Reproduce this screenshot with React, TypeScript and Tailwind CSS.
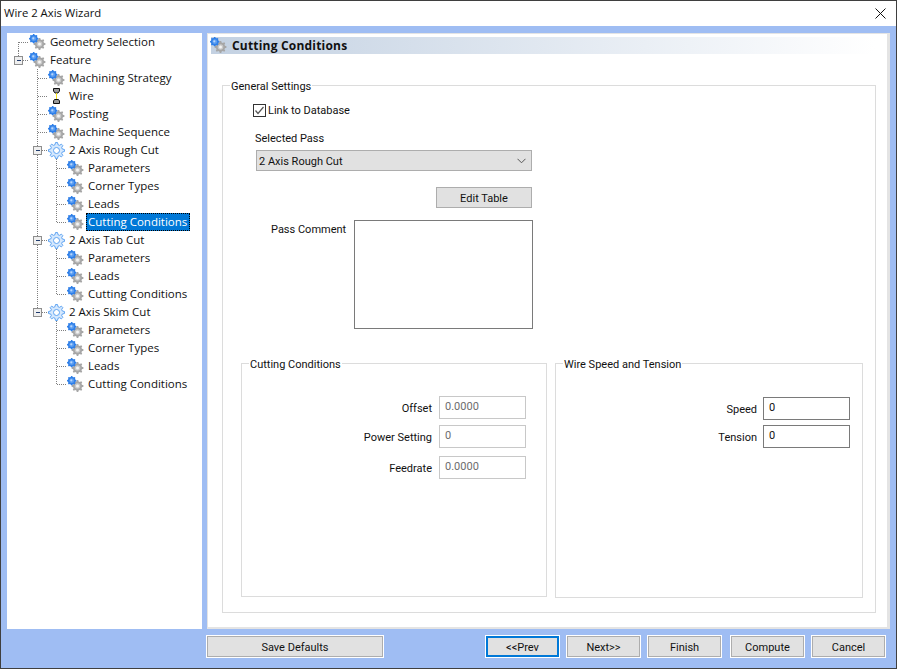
import type { ReactNode } from "react";

const FONT = "font-['Open_Sans','Noto_Sans',sans-serif] text-[11.5px] text-[#111]";
const PANEL_FONT = "font-['Roboto',sans-serif] text-[11px]";

type Kind = "gear" | "pass" | "wire";

interface TreeItem {
  label: string;
  level: 0 | 1 | 2;
  kind?: Kind;
  selected?: boolean;
  expander?: boolean;
  // this row is the last child at its own level
  last?: boolean;
  // the parent row is the last of its level, so no line runs past it
  parentLast?: boolean;
}

const TREE: TreeItem[] = [
  { label: "Geometry Selection", level: 0 },
  { label: "Feature", level: 0, expander: true, last: true },
  { label: "Machining Strategy", level: 1 },
  { label: "Wire", level: 1, kind: "wire" },
  { label: "Posting", level: 1 },
  { label: "Machine Sequence", level: 1 },
  { label: "2 Axis Rough Cut", level: 1, kind: "pass", expander: true },
  { label: "Parameters", level: 2 },
  { label: "Corner Types", level: 2 },
  { label: "Leads", level: 2 },
  { label: "Cutting Conditions", level: 2, last: true, selected: true },
  { label: "2 Axis Tab Cut", level: 1, kind: "pass", expander: true },
  { label: "Parameters", level: 2 },
  { label: "Leads", level: 2 },
  { label: "Cutting Conditions", level: 2, last: true },
  { label: "2 Axis Skim Cut", level: 1, kind: "pass", expander: true, last: true },
  { label: "Parameters", level: 2, parentLast: true },
  { label: "Corner Types", level: 2, parentLast: true },
  { label: "Leads", level: 2, parentLast: true },
  { label: "Cutting Conditions", level: 2, last: true, parentLast: true },
];

function gearPath(cx: number, cy: number, outer: number, inner: number, teeth: number): string {
  const pts: string[] = [];
  const step = (Math.PI * 2) / teeth;
  for (let i = 0; i < teeth; i++) {
    const a = i * step;
    const corners: [number, number][] = [
      [a - step * 0.32, inner],
      [a - step * 0.16, outer],
      [a + step * 0.16, outer],
      [a + step * 0.32, inner],
    ];
    corners.forEach(([ang, r]) => {
      pts.push(`${(cx + Math.cos(ang) * r).toFixed(2)} ${(cy + Math.sin(ang) * r).toFixed(2)}`);
    });
  }
  return `M${pts.join("L")}Z`;
}

function GearIcon() {
  return (
    <svg width="17" height="17" viewBox="0 0 17 17" className="shrink-0">
      <path d={gearPath(10.5, 10, 6, 4.6, 8)} fill="#a6a6a6" />
      <circle cx="10.5" cy="10" r="2.8" fill="#c9c9c9" />
      <circle cx="10.5" cy="10" r="1.5" fill="#f4f4f4" />
      <path d={gearPath(4.7, 4.7, 4.7, 3.9, 8)} fill="#2f7fe8" />
      <circle cx="4.7" cy="4.7" r="2.4" fill="#5d9ff2" />
      <circle cx="4.3" cy="4.3" r="1.1" fill="#b8d6fb" />
    </svg>
  );
}

function PassIcon() {
  return (
    <svg width="17" height="17" viewBox="0 0 17 17" className="shrink-0">
      <path d={gearPath(8.5, 8.5, 8, 6, 8)} fill="#d5e8fd" stroke="#5ea3f2" strokeWidth="1" />
      <circle cx="8.5" cy="8.5" r="3" fill="#ffffff" stroke="#5ea3f2" strokeWidth="1" />
    </svg>
  );
}

function WireIcon() {
  return (
    <svg width="17" height="17" viewBox="0 0 17 17" className="shrink-0">
      <path d="M5.500 0.500h6v2.500l-1.500 2h-3l-1.500-2z" fill="#9a9a9a" stroke="#111" strokeWidth="1" />
      <path d="M8.500 5v6" stroke="#f4e21a" strokeWidth="1" />
      <path d="M6.500 11.500h4l1 1.500v2.500h-6v-2.500z" fill="#9a9a9a" stroke="#111" strokeWidth="1" />
    </svg>
  );
}

// dotted tree connectors and the collapse box for one row
function Connector({ item }: { item: TreeItem }) {
  const lineX = [11.5, 30.5, 49.5][item.level];
  const first = item.label === "Geometry Selection";
  const width = [22, 41, 60][item.level];
  const dots = { stroke: "#7f7f7f", strokeDasharray: "1 1", shapeRendering: "crispEdges" as const };
  return (
    <svg width={width} height="18" className="shrink-0">
      {item.level === 2 && !item.parentLast && <path d="M30.500 0V18" {...dots} />}
      <path d={`M${lineX} ${first ? 9 : 0}V${item.last ? 9 : 18}`} {...dots} />
      <path d={`M${lineX} 9.500H${width}`} {...dots} />
      {item.expander && (
        <g shapeRendering="crispEdges">
          <rect x={lineX - 4} y="5.500" width="8" height="8" fill="#efefef" stroke="#8e8e8e" />
          <path d={`M${lineX - 2} 9.500h4`} stroke="#1f3b6e" />
        </g>
      )}
    </svg>
  );
}

function TreeRow({ item }: { item: TreeItem }) {
  return (
    <div className="flex h-[18px] items-center">
      <Connector item={item} />
      <div className="flex w-[19px] shrink-0 items-center">
        {item.kind === "wire" ? <WireIcon /> : item.kind === "pass" ? <PassIcon /> : <GearIcon />}
      </div>
      <span
        className={`h-[18px] whitespace-nowrap border px-px leading-[16px] ${
          item.selected ? "border-dotted border-black bg-[#0078d7] pr-[2px] text-white" : "border-transparent"
        }`}
      >
        {item.label}
      </span>
    </div>
  );
}

function Group({ title, className, children }: { title: string; className: string; children: ReactNode }) {
  return (
    <div className={`flex flex-col border border-[#dcdcdc] ${className}`}>
      <span className="-mt-[8px] ml-[7px] h-4 w-fit bg-white px-px leading-[18px]">{title}</span>
      {children}
    </div>
  );
}

function Field({ label, value, disabled, className }: { label: string; value: string; disabled?: boolean; className: string }) {
  return (
    <div className={`flex items-center justify-end ${disabled ? "gap-[7px] pr-[20px]" : "gap-[6px] pr-[12px]"} ${className}`}>
      <span className="pt-[4px]">{label}</span>
      <div
        className={`h-[23px] w-[87px] border pl-[5px] leading-[19px] ${
          disabled ? "border-[#c8c8c8] text-[#6d6d6d]" : "border-[#7a7a7a]"
        }`}
      >
        {value}
      </div>
    </div>
  );
}

function FooterButton({ label, primary, className = "w-[73px]" }: { label: string; primary?: boolean; className?: string }) {
  return (
    <button
      type="button"
      className={`h-[21px] bg-[#e1e1e1] pt-[2px] text-center ring-1 ring-white ${
        primary ? "border-2 border-[#0078d7] leading-[15px]" : "border border-[#adadad] leading-[17px]"
      } ${className}`}
    >
      {label}
    </button>
  );
}

export default function App() {
  return (
    <div className={`flex h-[669px] w-[897px] flex-col border border-[#3f3f3f] bg-white ${FONT}`}>
      {/* Title bar */}
      <div className="flex h-[25px] shrink-0 items-center justify-between pl-[3px] pr-[10px]">
        <span className="text-[11.3px]">Wire 2 Axis Wizard</span>
        <svg width="11" height="11" viewBox="0 0 11 11">
          <path d="M0.500 0.500L10.500 10.500M10.500 0.500L0.500 10.500" stroke="#111" strokeWidth="1" />
        </svg>
      </div>

      {/* Blue client area */}
      <div className="flex flex-1 flex-col bg-[#9fbdf3] pl-[6px] pt-[7px]">
        <div className="flex h-[596px] gap-[5px]">
          {/* Tree */}
          <div className="w-[195px] shrink-0 bg-white">
            {TREE.map((item, i) => (
              <TreeRow key={i} item={item} />
            ))}
          </div>

          {/* Page */}
          <div className={`flex w-[683px] flex-col border-b-2 border-l border-r-[3px] border-t border-[#e4e4e4] bg-white ${PANEL_FONT}`}>
            <div className="ml-[3px] mt-[3px] flex h-[17px] w-[664px] items-center bg-gradient-to-r from-[#c3d1e2] to-white">
              <div className="-ml-px w-[22px]">
                <GearIcon />
              </div>
              <span className="font-['Open_Sans',sans-serif] text-[12px] font-bold tracking-[0.2px]">Cutting Conditions</span>
            </div>

            <Group title="General Settings" className="ml-[14px] mt-[31px] h-[528px] w-[654px]">
              <div className="ml-[30px] mt-[8px] flex h-4 items-center gap-[2px]">
                <svg width="13" height="13" viewBox="0 0 13 13" className="shrink-0">
                  <rect x="0.500" y="0.500" width="12" height="12" fill="#fff" stroke="#333" shapeRendering="crispEdges" />
                  <path d="M2.500 6.500L5 9.500L10.500 3" fill="none" stroke="#555" strokeWidth="1.200" />
                </svg>
                <span className="pt-[2px]">Link to Database</span>
              </div>
              <span className="ml-[32px] mt-[13px] h-4 leading-4">Selected Pass</span>
              <div className="ml-[33px] mt-[3px] flex h-[21px] w-[276px] items-center justify-between border border-[#adadad] bg-[#e1e1e1] pl-[2px] pr-[5px]">
                <span className="pt-[3px]">2 Axis Rough Cut</span>
                <svg width="9" height="6" viewBox="0 0 9 6">
                  <path d="M0.500 0.800L4.500 4.800L8.500 0.800" fill="none" stroke="#555" strokeWidth="1" />
                </svg>
              </div>
              <button
                type="button"
                className="ml-[213px] mt-[16px] h-[21px] w-[96px] border border-[#adadad] bg-[#e1e1e1] pt-[2px] text-center leading-[17px]"
              >
                Edit Table
              </button>
              <div className="ml-[48px] mt-[12px] flex">
                <span className="w-[83px] whitespace-nowrap pt-[2px] leading-4">Pass Comment</span>
                <div className="h-[109px] w-[179px] border border-[#7a7a7a]" />
              </div>

              <div className="ml-[18px] mt-[34px] flex gap-[8px]">
                <Group title="Cutting Conditions" className="h-[234px] w-[306px]">
                  <Field label="Offset" value="0.0000" disabled className="mt-[24px]" />
                  <Field label="Power Setting" value="0" disabled className="mt-[6px]" />
                  <Field label="Feedrate" value="0.0000" disabled className="mt-[8px]" />
                </Group>
                <Group title="Wire Speed and Tension" className="h-[235px] w-[308px]">
                  <Field label="Speed" value="0" className="mt-[25px]" />
                  <Field label="Tension" value="0" className="mt-[5px]" />
                </Group>
              </div>
            </Group>
          </div>
        </div>

        {/* Buttons */}
        <div className={`mt-[7px] flex pr-[11px] ${PANEL_FONT}`}>
          <FooterButton label="Save Defaults" className="ml-[200px] w-[176px]" />
          <div className="flex-1" />
          <FooterButton label="<<Prev" primary />
          <FooterButton label="Next>>" className="ml-[8px] w-[73px]" />
          <FooterButton label="Finish" className="ml-[8px] w-[73px]" />
          <FooterButton label="Compute" className="ml-[10px] w-[73px]" />
          <FooterButton label="Cancel" className="ml-[8px] w-[73px]" />
        </div>
      </div>
    </div>
  );
}
